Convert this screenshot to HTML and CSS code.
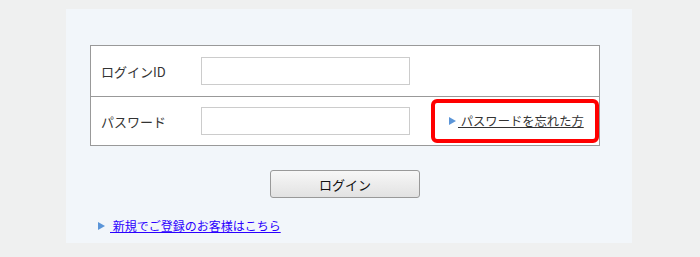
FILE: index.html
```html
<!DOCTYPE html>
<html lang="ja">
<head>
    <meta charset="UTF-8">
    <title>ログイン</title>
    <link rel="stylesheet" href="styles.css">
</head>
<body>
    <div class="panel">
        <!-- ----- login form ----- -->
        <div class="login-box">
            <div class="row">
                <label class="label" for="login-id">ログインID</label>
                <input type="text" class="field" id="login-id">
            </div>
            <div class="row">
                <label class="label" for="password">パスワード</label>
                <input type="password" class="field" id="password">
                <div class="forgot">
                    <span class="arrow"></span>
                    <a href="#" class="forgot-link">&nbsp;パスワードを忘れた方</a>
                </div>
            </div>
        </div>

        <div class="btn-row">
            <button class="btn-login">ログイン</button>
        </div>

        <div class="register">
            <span class="arrow"></span>
            <a href="#" class="register-link">&nbsp;新規でご登録のお客様はこちら</a>
        </div>
    </div>
</body>
</html>
```

FILE: styles.css
```css
*{
    margin: 0;
    padding: 0;
    box-sizing: border-box;
}
body{
    background-color: #eff0f0;
    font-family: "Noto Sans CJK JP", "DejaVu Sans", sans-serif;
    font-size: 13px;
    color: #333;
}
.panel{
    width: 566px;
    height: 234px;
    margin: 9px 0 0 66px;
    padding: 36px 32px 0 24px;
    background-color: #f2f6fa;
}
.login-box{
    width: 510px;
    border: 1px solid #999;
    background-color: #fff;
}
.row{
    display: flex;
    align-items: center;
    height: 50px;
}
.row + .row{
    border-top: 1px solid #999;
    height: 49px;
}
.label{
    width: 110px;
    padding-left: 10px;
    color: #333;
}
.field{
    width: 209px;
    height: 28px;
    border: 1px solid #ccc;
    outline: none;
    background: #fff;
}
.forgot{
    display: flex;
    align-items: center;
    margin-left: 21px;
    width: 168px;
    height: 44px;
    border: 4px solid #ff0000;
    border-radius: 6px;
    padding-left: 14px;
}
.arrow{
    display: inline-block;
    width: 0;
    height: 0;
    border-top: 4px solid transparent;
    border-bottom: 4px solid transparent;
    border-left: 7px solid #5b95d8;
    margin-right: 2px;
}
.forgot-link{
    color: #333;
    font-size: 12.3px;
    text-decoration: underline;
}
.btn-row{
    width: 510px;
    display: flex;
    justify-content: center;
    margin-top: 24px;
}
.btn-login{
    width: 150px;
    height: 28px;
    border: 1px solid #999;
    border-radius: 3px;
    background: linear-gradient(#f7f7f7, #e2e2e2);
    font-family: inherit;
    font-size: 13px;
    color: #111;
}
.register{
    display: flex;
    align-items: center;
    margin: 19px 0 0 8px;
}
.register .arrow{
    margin-right: 5px;
}
.register-link{
    color: #2a00ff;
    font-size: 12px;
    text-decoration: underline;
}
```
